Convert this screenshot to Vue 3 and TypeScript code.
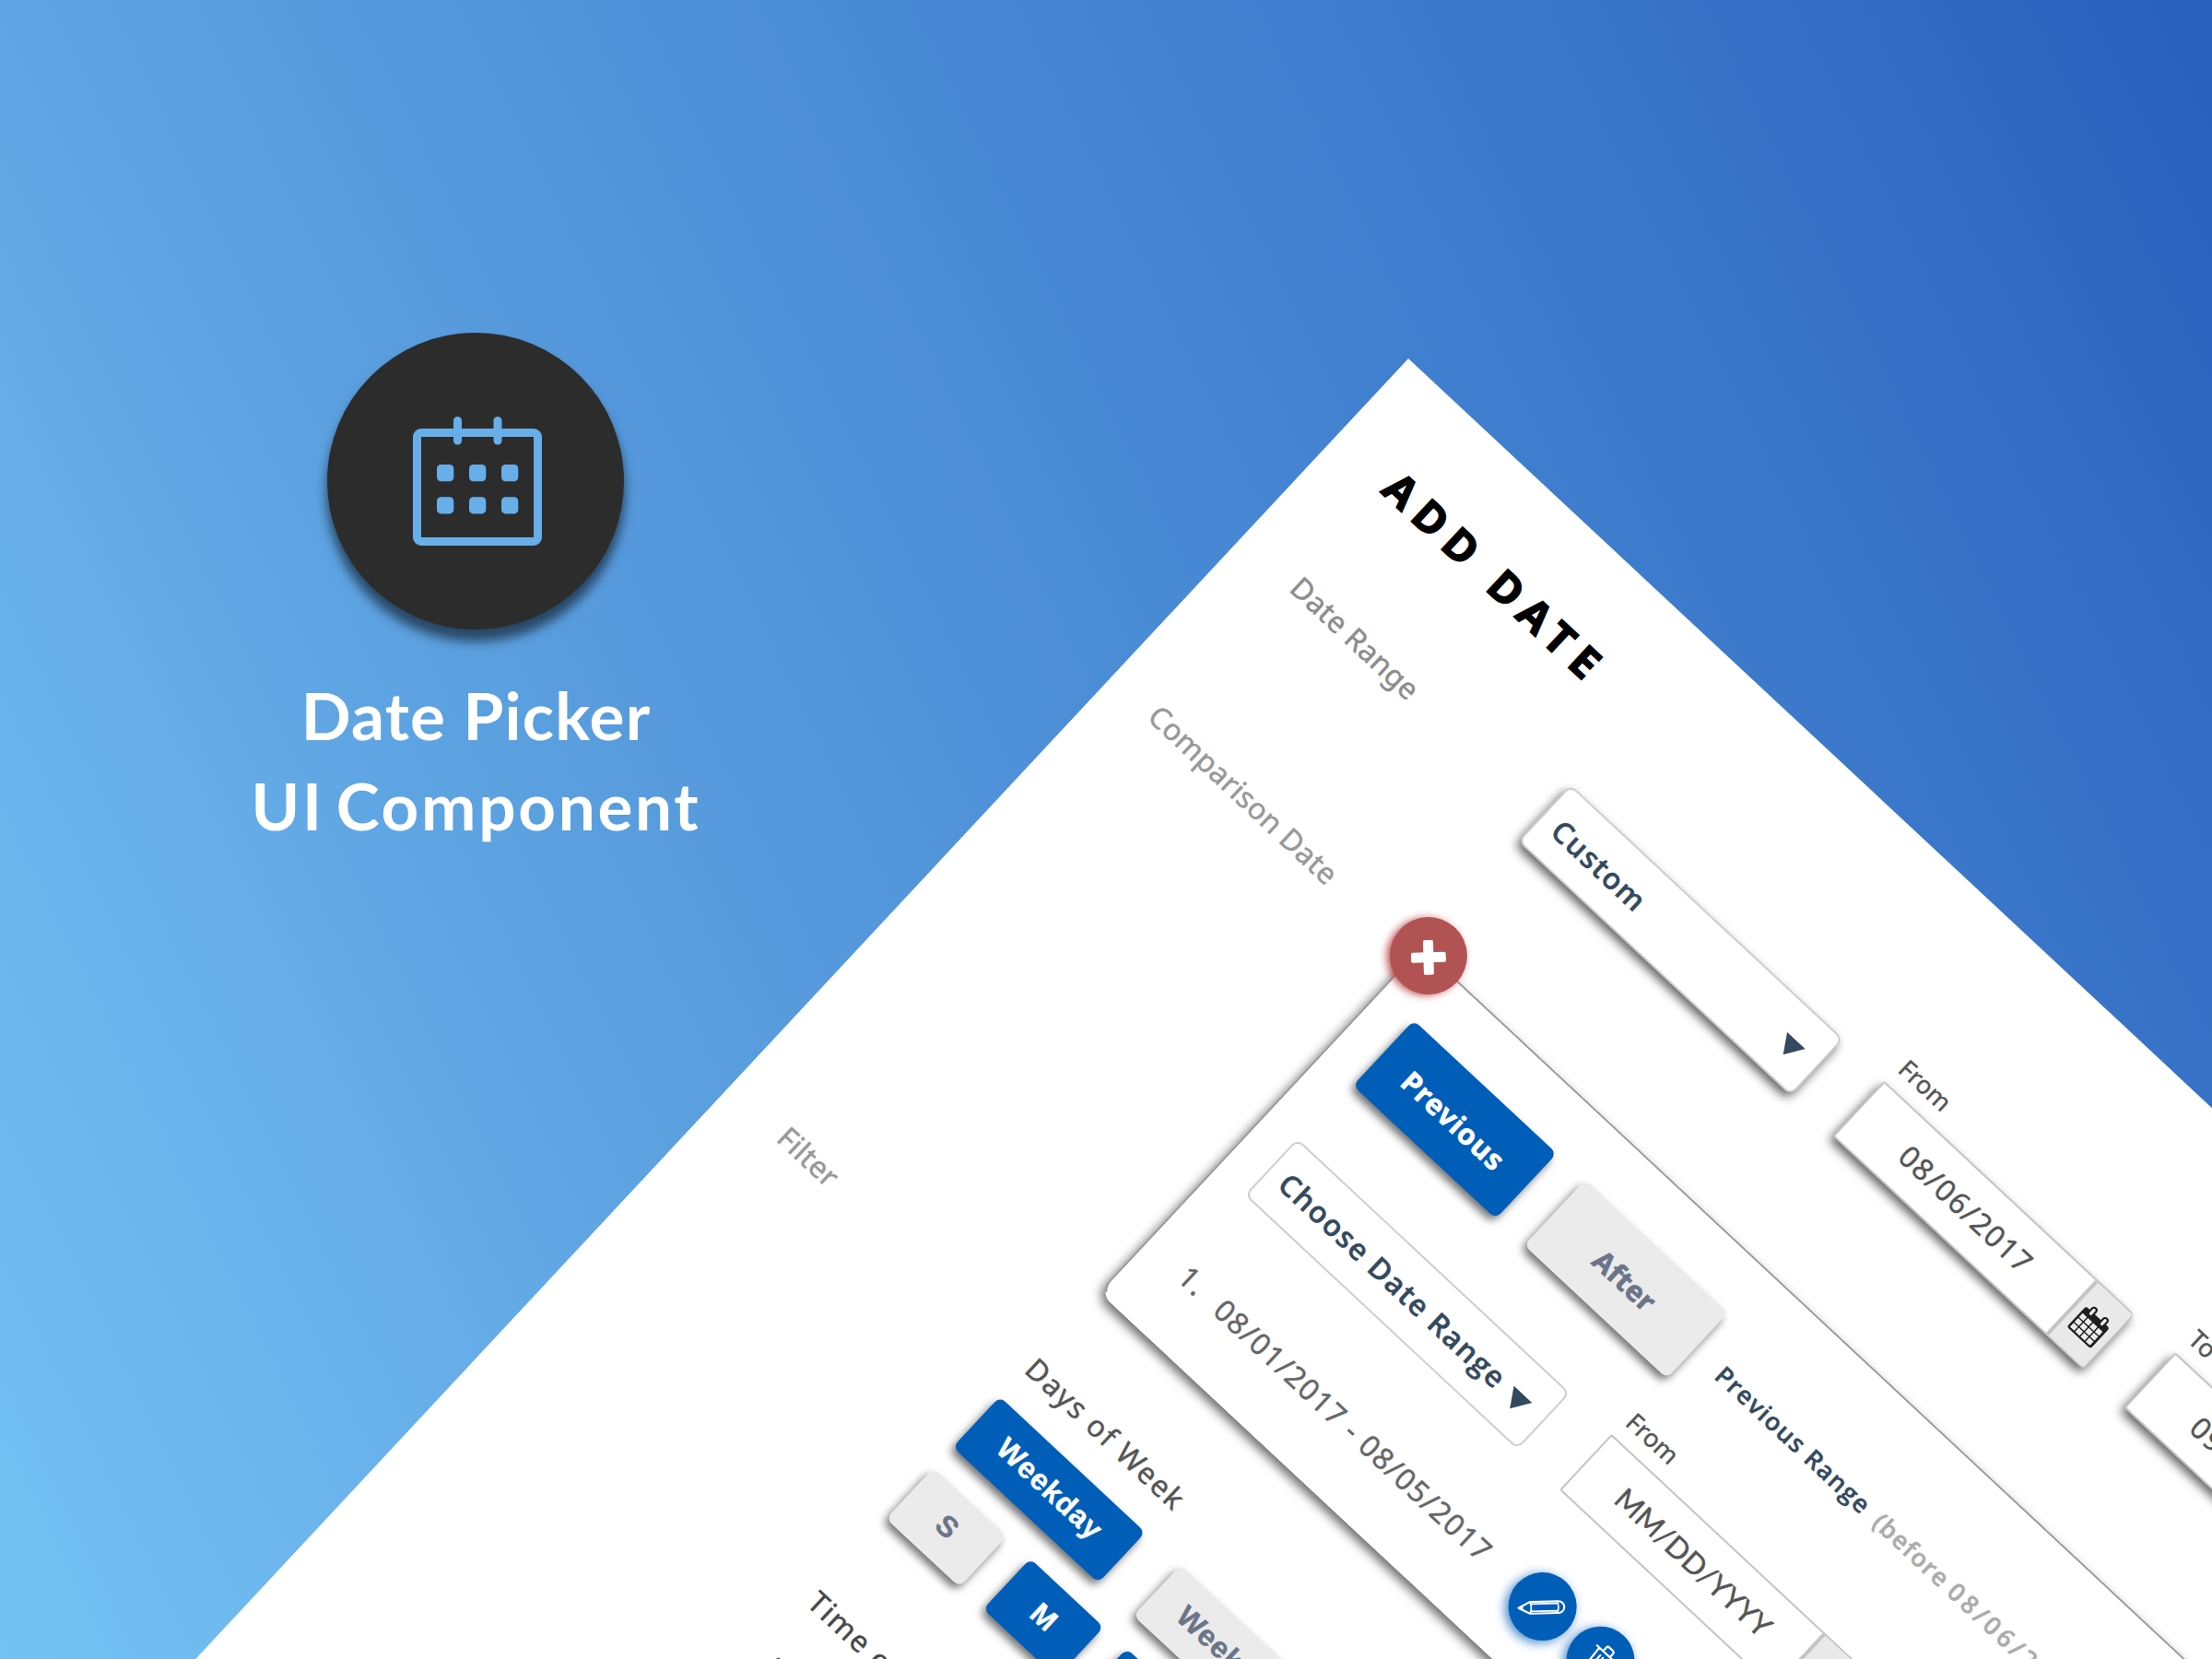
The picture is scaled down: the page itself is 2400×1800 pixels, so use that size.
<script setup lang="ts">
interface Day {
  id: number
  label: string
  active: boolean
}

const days: Day[] = ['S', 'M', 'T', 'W', 'T', 'F', 'S'].map((label, id) => ({
  id,
  label,
  active: id > 0 && id < 6,
}))
</script>

<template>
  <main class="stage">
    <section class="hero">
      <div class="badge">
        <svg class="badge-icon" width="142" height="142" viewBox="0 0 142 142" fill="#68aee9">
          <path fill-rule="evenodd" d="M9 14h122a9 9 0 0 1 9 9v109a9 9 0 0 1-9 9H9a9 9 0 0 1-9-9V23a9 9 0 0 1 9-9zM9 23v109h122V23z" />
          <rect x="44" y="1" width="9" height="30.500" rx="4.500" />
          <rect x="87.500" y="1" width="9" height="30.500" rx="4.500" />
          <g v-for="y in [53, 88.2]" :key="y">
            <rect v-for="x in [26, 61, 96]" :key="x" :x="x" :y="y" width="18.300" height="18.200" rx="4.500" />
          </g>
        </svg>
      </div>
      <h1 class="hero-title">
        <span class="line-a">Date Picker</span>
        <span class="line-b">UI Component</span>
      </h1>
    </section>

    <section class="sheet">
      <h2 class="sheet-title">ADD DATE</h2>

      <div class="row row-range">
        <div class="label label-mid">Date Range</div>
        <div class="fields">
          <div class="select raised">
            <span>Custom</span>
            <svg class="arrow" width="27" height="21" viewBox="0 0 27 21"><path d="M0 0h27L13.500 21z" fill="#34495e" /></svg>
          </div>
          <div class="field field-from">
            <div class="caption">From</div>
            <div class="date raised">
              <span class="value">08/06/2017</span>
              <span class="addon">
                <svg width="37" height="39" viewBox="0 0 37 39">
                  <rect x="1" y="7.500" width="35" height="30.500" rx="3" fill="#1e1e1e" />
                  <g fill="#ececec">
                    <g v-for="y in [15.500, 22.700, 29.900]" :key="y">
                      <rect v-for="x in [3.500, 11.300, 19.100, 26.900]" :key="x" :x="x" :y="y" width="6.300" height="5.800" />
                    </g>
                  </g>
                  <g fill="#e9e9e9" stroke="#1e1e1e" stroke-width="2.200">
                    <rect x="7.500" y="2" width="5.600" height="10.500" rx="2.800" />
                    <rect x="24" y="2" width="5.600" height="10.500" rx="2.800" />
                  </g>
                </svg>
              </span>
            </div>
          </div>
          <div class="field field-to">
            <div class="caption">To</div>
            <div class="date raised">
              <span class="value">09/06/2017</span>
              <span class="addon"></span>
            </div>
          </div>
        </div>
      </div>

      <div class="row row-compare">
        <div class="label label-compare">Comparison Date</div>
        <div class="panel">
          <div class="add">
            <svg width="38" height="38" viewBox="0 0 38 38" fill="#fff">
              <rect x="13.500" y="0" width="11" height="38" rx="2" />
              <rect x="0" y="13.500" width="38" height="11" rx="2" />
            </svg>
          </div>

          <div class="modes">
            <div class="mode mode-on">Previous</div>
            <div class="mode mode-off">After</div>
            <div class="hint">
              <span class="hint-name">Previous Range</span>
              <span class="hint-note">(before</span>
              <span class="hint-date">08/06/2017)</span>
            </div>
          </div>

          <div class="pick">
            <div class="select">
              <span>Choose Date Range</span>
              <svg class="arrow" width="27" height="21" viewBox="0 0 27 21"><path d="M0 0h27L13.500 21z" fill="#34495e" /></svg>
            </div>
            <div class="field field-pick">
              <div class="caption">From</div>
              <div class="date">
                <span class="value value-empty">MM/DD/YYYY</span>
                <span class="addon"></span>
              </div>
            </div>
          </div>

          <div class="entry">
            <span class="entry-no">1.</span>
            <span class="entry-range">08/01/2017 - 08/05/2017</span>
            <span class="round">
              <svg width="74" height="74" viewBox="-37 -37 74 74" fill="none" stroke="#fff" stroke-width="2.100" stroke-linejoin="round">
                <g transform="rotate(-44.500) translate(-1.200 1)">
                  <path d="M-25 0L-12.500-6.300H18.500a6.300 6.300 0 0 1 0 12.600H-12.500z" />
                  <path d="M-12.500-6.300q3 6.300 0 12.600M17-6.300q3 6.300 0 12.600M-12.500-4H17M-12.500 4H17" stroke-width="1.700" />
                  <path d="M-25 0l4.500-2.300v4.600z" fill="#fff" stroke-width="1" />
                </g>
              </svg>
            </span>
            <span class="round">
              <svg width="74" height="74" viewBox="0 0 74 74" fill="none" stroke="#fff" stroke-width="2.200" stroke-linejoin="round" stroke-linecap="round">
                <path d="M23 27.500h28M26.500 27.500l2 26h17l2-26M32 27v-4.500a2.500 2.500 0 0 1 2.500-2.500h5a2.500 2.500 0 0 1 2.500 2.500V27M33 33v15M37 33v15M41 33v15" />
              </svg>
            </span>
          </div>
        </div>
      </div>

      <div class="row row-filter">
        <div class="label label-filter">Filter</div>
        <div class="filters">
          <div class="group">Days of Week</div>
          <div class="chips chips-wide">
            <div class="chip chip-on">Weekday</div>
            <div class="chip">Weekend</div>
          </div>
          <div class="chips">
            <div v-for="d in days" :key="d.id" class="chip" :class="{ 'chip-on': d.active }">{{ d.label }}</div>
          </div>
          <div class="group group-time">Time of Day</div>
          <div class="group group-sub">AM</div>
        </div>
      </div>
    </section>
  </main>
</template>

<style>
html,
body {
  margin: 0;
  overflow: hidden;
}
</style>

<style scoped>
* {
  box-sizing: border-box;
}

.stage {
  position: relative;
  width: 2400px;
  height: 1800px;
  overflow: hidden;
  background: linear-gradient(64deg, #74c2f3 0%, #66ade9 20%, #5ca1e0 30%, #4484d2 62%, #3a76c9 78%, #2860bc 100%);
  font-family: "Noto Sans", "Open Sans", sans-serif;
}

/* Left-hand title block */
.hero {
  display: flex;
  flex-direction: column;
  align-items: center;
  width: 1032px;
  padding-top: 361px;
}

.badge {
  display: flex;
  width: 322px;
  height: 322px;
  padding: 90px 0 0 92.500px;
  border-radius: 50%;
  background: #2c2c2c;
  box-shadow: 0 12px 12px 1px rgba(0, 0, 0, 0.55);
}

.badge-icon {
  display: block;
}

.hero-title {
  display: flex;
  flex-direction: column;
  align-items: center;
  margin: 44px 0 0 1px;
  color: #fff;
  font: 700 71px/98px Lato, sans-serif;
  white-space: nowrap;
}

.line-a {
  letter-spacing: 1.2px;
}

.line-b {
  letter-spacing: 2.7px;
  word-spacing: -7px;
}

/* Tilted form sheet */
.sheet {
  position: absolute;
  left: 1527.7px;
  top: 389px;
  width: 2100px;
  height: 2600px;
  padding: 79px 0 0 76px;
  background: #fff;
  transform: rotate(43deg);
  transform-origin: 0 0;
  -webkit-text-stroke: 0.450px;
}

.sheet-title {
  margin: 0;
  color: #000;
  font: 700 47px/60px "Noto Sans", sans-serif;
  letter-spacing: 10.300px;
  -webkit-text-stroke: 1.400px;
}

.row {
  display: grid;
  grid-template-columns: 368px 1fr;
  align-items: start;
}

.row-range {
  height: 84px;
  margin-top: 79px;
}

.row-compare {
  margin-top: 155px;
}

.row-filter {
  margin-top: 87px;
}

.label {
  color: #8c8c8c;
  font-size: 32px;
  line-height: 40px;
  letter-spacing: 0.300px;
  white-space: nowrap;
}

.label-mid {
  padding-top: 23px;
}

.label-compare {
  margin: -9.500px 0 0 -17.500px;
  color: #989898;
}

.label-filter {
  color: #989898;
}

.fields,
.pick {
  display: flex;
  align-items: flex-start;
}

.select {
  display: flex;
  align-items: center;
  width: 405px;
  height: 84px;
  padding: 0 21px 0 17px;
  border: 2px solid #cecece;
  border-radius: 9px;
  background: #fff;
  color: #34495e;
  font: 600 32px/40px "Open Sans", sans-serif;
  letter-spacing: 1.500px;
  white-space: nowrap;
}

.select span {
  padding-top: 1px;
}

.arrow {
  display: block;
  margin: 9px 0 0 auto;
}

.raised {
  box-shadow: 0 6px 11px rgba(0, 0, 0, 0.6);
}

.caption {
  height: 30px;
  margin-bottom: 12px;
  padding-left: 3px;
  color: #555;
  font-size: 27px;
  line-height: 30px;
}

.field {
  width: 372px;
  margin-top: -39.500px;
}

.field-from {
  margin-left: 63px;
}

.field-to {
  margin-left: 60px;
}

.field-to .caption {
  padding-left: 1px;
}

.field-pick {
  margin-left: 63px;
}

.date {
  display: flex;
  height: 82.500px;
  border: 2px solid #c4c4c4;
  border-radius: 3px 6px 6px 3px;
  background: #fff;
  color: #555;
}

.value {
  width: 313px;
  padding-left: 65.500px;
  font-size: 32px;
  line-height: 78.500px;
  letter-spacing: 1.550px;
  white-space: nowrap;
}

.value-empty {
  padding-left: 49px;
  font-family: Lato, sans-serif;
  letter-spacing: 0.200px;
}

.addon {
  flex: 1;
  padding: 20px 0 0 7px;
  border-left: 4px solid #c4c4c4;
  background: #e9e9e9;
}

.addon svg {
  display: block;
}

/* Comparison panel */
.panel {
  position: relative;
  width: 1640px;
  height: 513px;
  margin-left: 1px;
  padding: 61.500px 0 0 47px;
  border: 2px solid #999;
  border-bottom-color: #fff;
  border-radius: 18px;
  background: #fff;
  box-shadow: 0 6px 12px rgba(0, 0, 0, 0.58);
}

.add {
  position: absolute;
  left: -31px;
  top: -42.500px;
  display: flex;
  align-items: center;
  justify-content: center;
  width: 84px;
  height: 84px;
  border-radius: 50%;
  background: #b25353;
  box-shadow: -2px 3px 9px rgba(178, 50, 50, 0.8);
}

.add svg {
  transform: translate(1.200px, 1.300px) rotate(-44.500deg);
}

.modes {
  display: flex;
  align-items: flex-start;
}

.mode {
  width: 212px;
  height: 97px;
  margin-right: 42px;
  padding-left: 1px;
  border-radius: 8px;
  box-shadow: 0 6px 10px rgba(0, 0, 0, 0.55);
  font-size: 31px;
  font-weight: 700;
  line-height: 100px;
  text-align: center;
  -webkit-text-stroke: 0.700px;
}

.mode-on {
  padding-left: 0;
  background: #005eb8;
  color: #fff;
  letter-spacing: 1px;
}

.mode-off {
  padding-left: 0;
  background: #ebebeb;
  color: #6b7489;
  letter-spacing: 0.200px;
}

.hint {
  display: flex;
  margin: 32px 0 0 -6px;
  color: #ababab;
  font: 600 27px/40px "Open Sans", sans-serif;
  white-space: nowrap;
}

.hint-name {
  width: 234px;
  color: #34495e;
  letter-spacing: 1.400px;
}

.hint-note {
  width: 110.500px;
  letter-spacing: 1.150px;
}

.hint-date {
  letter-spacing: 3.900px;
}

.pick {
  height: 84px;
  margin: 83px 0 0 -5px;
}

.entry {
  display: flex;
  align-items: center;
  height: 74px;
  margin: 69.500px 0 0 3px;
  color: #666;
  font-size: 32px;
  letter-spacing: 1.380px;
  white-space: nowrap;
}

.entry-no {
  width: 53px;
  margin: -2px 0 0;
}

.entry-range {
  width: 443px;
  margin-top: -2px;
}

.round {
  width: 74px;
  height: 74px;
  margin-right: 12px;
  border-radius: 50%;
  background: #005eb8;
  box-shadow: -1px 4px 12px rgba(0, 94, 184, 0.75);
}

.round svg {
  display: block;
}

/* Filter section */
.group {
  height: 40px;
  color: #555;
  font-size: 32px;
  line-height: 40px;
  letter-spacing: 1.780px;
  white-space: nowrap;
}

.group-time {
  margin-top: 96px;
  color: #484848;
}

.group-sub {
  margin: 45px 0 0 9px;
  color: #484848;
}

.chips {
  display: flex;
  gap: 34.500px;
  margin-top: 30.500px;
}

.chips-wide {
  gap: 52px;
  margin-top: 29px;
}

.chip {
  width: 109px;
  height: 75px;
  border-radius: 8px;
  background: #ebebeb;
  box-shadow: 0 6px 10px rgba(0, 0, 0, 0.55);
  color: #6b7489;
  font: 700 32px/72px "Liberation Sans", sans-serif;
  text-align: center;
}

.chips-wide .chip {
  width: 216px;
  letter-spacing: 0.900px;
}

.chip-on {
  background: #005eb8;
  color: #fff;
}
</style>
